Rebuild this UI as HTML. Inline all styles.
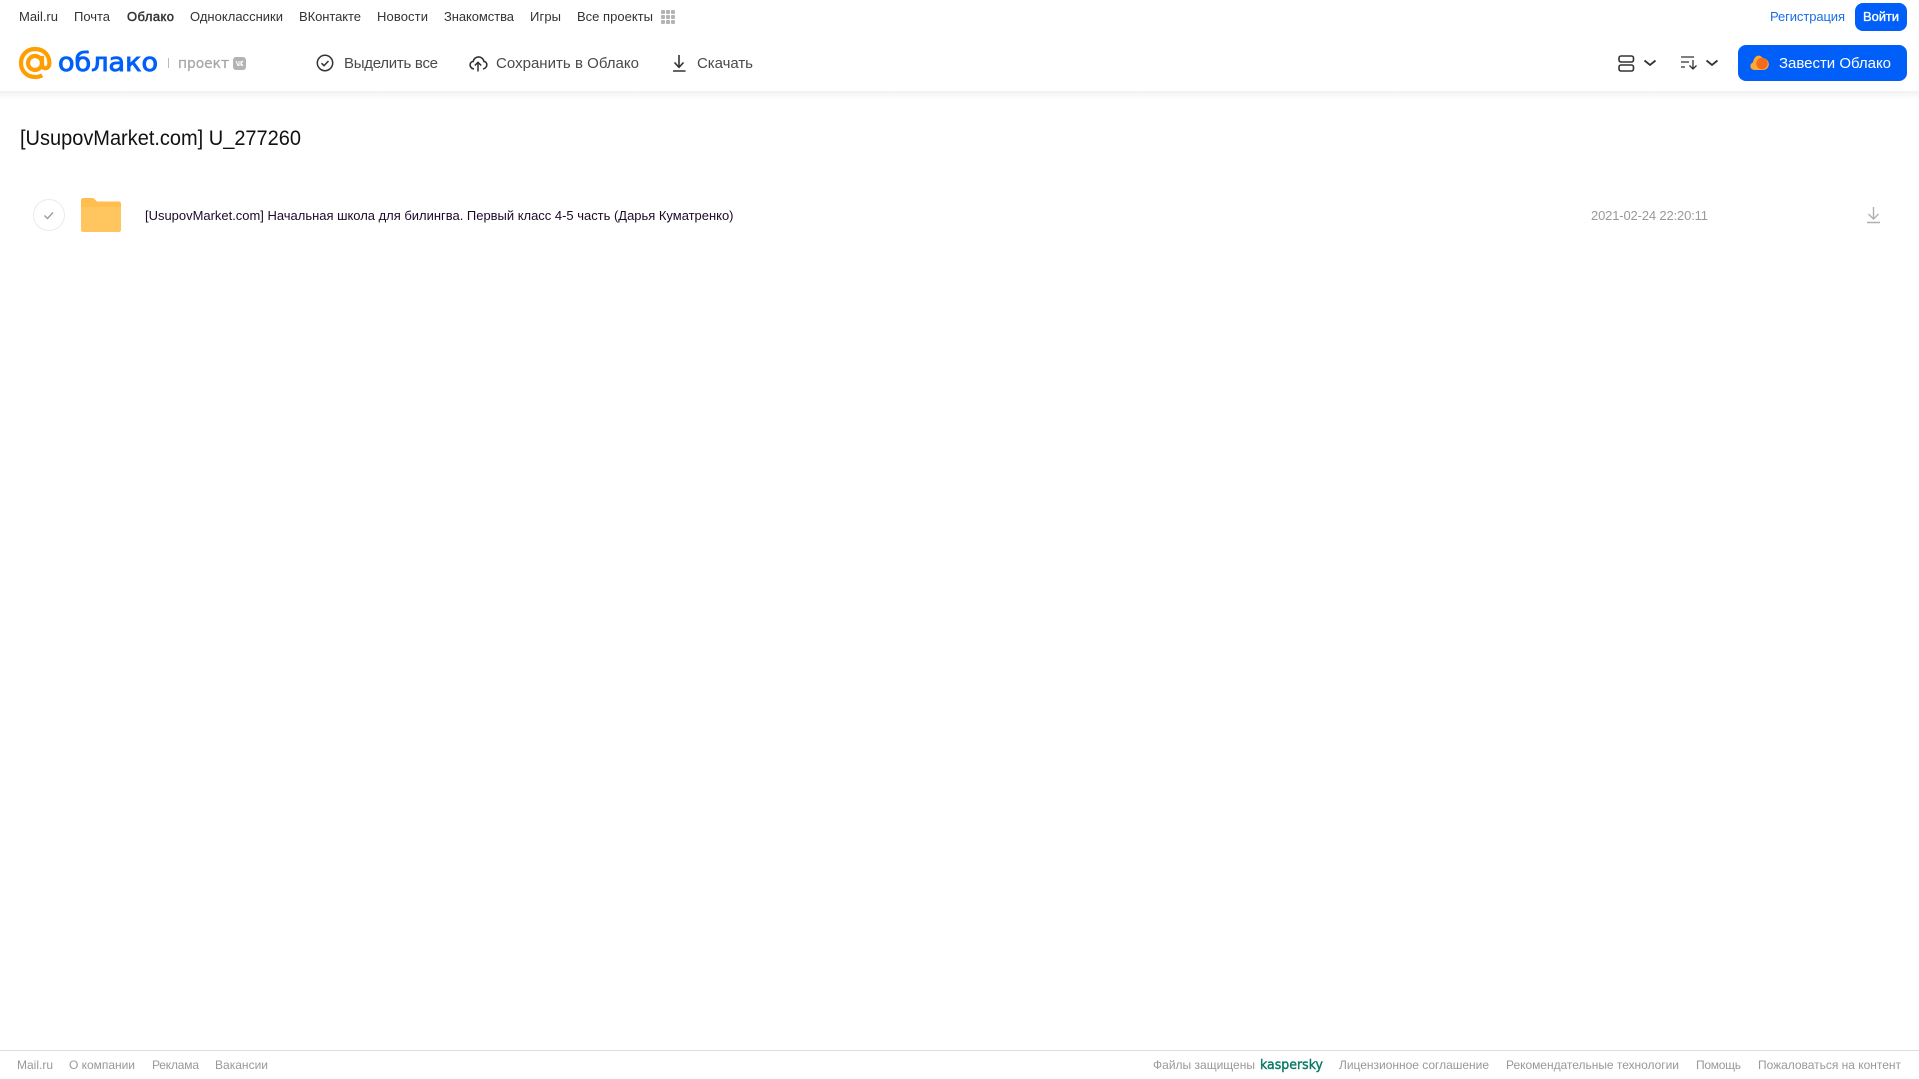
<!DOCTYPE html>
<html lang="ru"><head><meta charset="utf-8"><title>Облако</title>
<style>
html,body{margin:0;padding:0;background:#fff;width:1919px;height:1079px;overflow:hidden}
svg{position:absolute;left:0;top:0;display:block}
text{font-family:"Liberation Sans",sans-serif}
.n{font-size:13px;fill:#333}
.t{font-size:15px;fill:#4a4a4a}
.f{font-size:12px;fill:#999}
</style></head><body>
<svg width="1919" height="1079" viewBox="0 0 1919 1079" xmlns="http://www.w3.org/2000/svg">
<defs><linearGradient id="s" x1="0" y1="0" x2="0" y2="1"><stop offset="0" stop-color="#f2f2f2"/><stop offset="1" stop-color="#fff"/></linearGradient></defs>
<rect x="0" y="91" width="1919" height="9" fill="url(#s)"/>

<text class="n" x="19" y="21" textLength="39">Mail.ru</text>
<text class="n" x="74" y="21" textLength="36">Почта</text>
<text class="n" x="127" y="21" textLength="47" stroke="#333" stroke-width=".45">Облако</text>
<text class="n" x="190" y="21" textLength="93">Одноклассники</text>
<text class="n" x="299" y="21" textLength="62">ВКонтакте</text>
<text class="n" x="377" y="21" textLength="51">Новости</text>
<text class="n" x="444" y="21" textLength="70">Знакомства</text>
<text class="n" x="530" y="21" textLength="31">Игры</text>
<text class="n" x="577" y="21" textLength="76">Все проекты</text>
<g fill="#b3b3b3"><rect x="661" y="10" width="4" height="4" rx="1"/><rect x="666" y="10" width="4" height="4" rx="1"/><rect x="671" y="10" width="4" height="4" rx="1"/><rect x="661" y="15" width="4" height="4" rx="1"/><rect x="666" y="15" width="4" height="4" rx="1"/><rect x="671" y="15" width="4" height="4" rx="1"/><rect x="661" y="20" width="4" height="4" rx="1"/><rect x="666" y="20" width="4" height="4" rx="1"/><rect x="671" y="20" width="4" height="4" rx="1"/></g>

<g fill="none" stroke="#ff9e00" stroke-width="4.200">
<circle cx="35" cy="63" r="7"/>
<path d="M42 56v8.500c0 5.200 7.400 5.200 7.400-1.500 0-8.400-6.200-14-14.400-14-8.400 0-14 6.300-14 14 0 8.100 5.900 14 14 14 2.800 0 5-.5 7.200-1.700"/>
</g>
<text x="58" y="71" font-size="26" fill="#005ff9" stroke="#005ff9" stroke-width=".9" textLength="100" lengthAdjust="spacingAndGlyphs" style='font-family:"DejaVu Sans",sans-serif'>облако</text>
<rect x="168" y="58" width="1" height="10" fill="#bbb"/>
<text x="178" y="68" font-size="14" fill="#a6a6a6" stroke="#a6a6a6" stroke-width=".25" textLength="51" lengthAdjust="spacingAndGlyphs" style='font-family:"DejaVu Sans",sans-serif'>проект</text>
<rect x="233" y="57" width="13" height="13" rx="3" fill="#b3b3b3"/>
<path d="M236 61l2 4.500h1v-4.500M243 61l-2 2 2 3M241 61v5" fill="none" stroke="#fff" stroke-width="1"/>

<circle cx="325" cy="63" r="7.700" fill="none" stroke="#333" stroke-width="1.500"/>
<path d="M321.500 63.200l2.500 2.500 4.500-4.700" fill="none" stroke="#333" stroke-width="1.500"/>
<text class="t" x="344" y="68" textLength="94">Выделить все</text>

<path d="M474 69c-3-.5-4.300-2.800-3.800-5 .4-1.500 1.500-2.400 3-2.500.5-3 3-4.600 5.300-4.600 2.800 0 5 2 5.400 4.500 1.800.2 2.900 1.600 2.900 3.300 0 2-1.300 3.800-3.800 4.300" fill="none" stroke="#333" stroke-width="1.600"/>
<path d="M478 71.500v-9M474.800 65.500l3.200-3.200 3.200 3.200" fill="none" stroke="#333" stroke-width="1.500"/>
<text class="t" x="496" y="68" textLength="143">Сохранить в Облако</text>

<path d="M679 55v12M674.500 62.500l4.500 4.800 4.500-4.800M673 71h12.500" fill="none" stroke="#333" stroke-width="1.600"/>
<text class="t" x="697" y="68" textLength="56">Скачать</text>

<g fill="none" stroke="#333" stroke-width="1.600"><rect x="1619" y="56" width="14.500" height="6" rx="2"/><rect x="1619" y="65" width="14.500" height="6" rx="2"/>
<path stroke-width="1.800" d="M1644.500 60.500l5.500 4.500 5.500-4.500"/></g>
<g fill="none" stroke="#333" stroke-width="1.300"><path d="M1681 57h13M1681 62h8M1681 67h4M1693 60v9M1689.500 65.500l3.500 3.500 3.500-3.500"/><path stroke-width="1.800" d="M1706.500 60.500l5.500 4.500 5.500-4.500"/></g>

<text x="1770" y="21" font-size="13" fill="#1a6fe8" textLength="75">Регистрация</text>
<rect x="1855" y="3" width="52" height="28" rx="8" fill="#005ff9"/>
<text x="1863" y="21" font-size="13" fill="#fff" stroke="#fff" stroke-width=".35" textLength="36">Войти</text>
<rect x="1738" y="45" width="169" height="36" rx="8" fill="#005ff9"/>
<path d="M1755 70c-3.200 0-4.600-2-4.600-3.900 0-1.700 1-3 2.400-3.500.5-2.700 2.500-7 5.500-7 2 0 3.500 1 4.500 2.600 3-.2 6 2.500 6 6 0 3.300-2.500 5.800-5.800 5.800z" fill="#ffa930"/>
<circle cx="1762" cy="63.500" r="5.700" fill="#f46a1f"/>
<text x="1779" y="68" font-size="15" fill="#fff" textLength="112">Завести Облако</text>

<text x="20" y="145" font-size="21" fill="#111" textLength="281" lengthAdjust="spacingAndGlyphs">[UsupovMarket.com] U_277260</text>

<circle cx="49" cy="215" r="15.500" fill="#fff" stroke="#ebebeb" stroke-width="1"/>
<path d="M44.500 215.500l3 3 5.500-6" fill="none" stroke="#999" stroke-width="1.300"/>
<path d="M81 200c0-1.100.9-2 2-2h9c3 0 3.500 3.500 6 3.500h21c1.100 0 2 .9 2 2v5H81z" fill="#ffbe4f"/>
<path d="M81 207h40v23c0 1.100-.9 2-2 2H83c-1.100 0-2-.9-2-2z" fill="#ffc55e"/>
<text x="145" y="220" font-size="13" fill="#1c0a2a" textLength="588.500" lengthAdjust="spacingAndGlyphs">[UsupovMarket.com] Начальная школа для билингва. Первый класс 4-5 часть (Дарья Куматренко)</text>
<text x="1591" y="220" font-size="13" fill="#999" textLength="117">2021-02-24 22:20:11</text>
<path d="M1873.500 207v12M1868.500 214l5 5 5-5M1867 222.500h13" fill="none" stroke="#b0b0b0" stroke-width="1.400"/>

<rect x="0" y="1050" width="1919" height="1" fill="#ddd"/>
<text class="f" x="17" y="1069" textLength="36">Mail.ru</text>
<text class="f" x="69" y="1069" textLength="66">О компании</text>
<text class="f" x="152" y="1069" textLength="47">Реклама</text>
<text class="f" x="215" y="1069" textLength="53">Вакансии</text>
<text class="f" x="1153" y="1069" textLength="102">Файлы защищены</text>
<text x="1260" y="1069" font-size="13" fill="#0a7a66" stroke="#0a7a66" stroke-width=".4" textLength="63" lengthAdjust="spacingAndGlyphs" style='font-family:"DejaVu Sans",sans-serif'>kaspersky</text>
<text class="f" x="1339" y="1069" textLength="150">Лицензионное соглашение</text>
<text class="f" x="1506" y="1069" textLength="173">Рекомендательные технологии</text>
<text class="f" x="1696" y="1069" textLength="45">Помощь</text>
<text class="f" x="1758" y="1069" textLength="143">Пожаловаться на контент</text>
</svg>
</body></html>
